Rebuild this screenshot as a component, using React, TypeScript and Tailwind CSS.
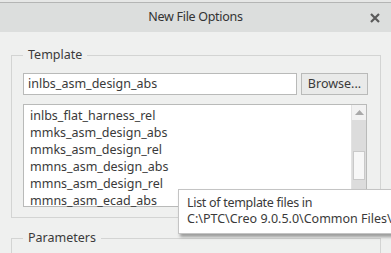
import React from "react";

const templates = [
    "inlbs_flat_harness_rel",
    "mmks_asm_design_abs",
    "mmks_asm_design_rel",
    "mmns_asm_design_abs",
    "mmns_asm_design_rel",
    "mmns_asm_ecad_abs",
];

function CloseIcon() {
    return (
        <svg width="10" height="10" viewBox="0 0 10 10">
            <path d="M1 1 L9 9 M9 1 L1 9" stroke="#5a5a5a" strokeWidth="2.2" />
        </svg>
    );
}

function App() {
    return (
        <div
            className="relative w-[391px] h-[253px] overflow-hidden bg-[#eff0ef] text-[#3a3a3a]"
            style={{ fontFamily: "'Noto Sans', 'Open Sans', sans-serif" }}
        >
            {/* window top edge */}
            <div className="h-[3px] bg-[#e6e7e6] border-b border-[#b4b5b4]" />

            {/* title bar */}
            <div className="flex items-center h-[29px] bg-[#dcdedd] pl-[21px] pr-[11px]">
                <div className="flex-1 text-center text-[12.5px] tracking-[-0.3px] text-[#333]">New File Options</div>
                <CloseIcon />
            </div>

            {/* template group */}
            <fieldset className="mt-[15px] ml-[11px] w-[370px] border border-[#d3d4d3] px-[11px] pt-[10px] pb-[10px]">
                <legend className="px-[5px] text-[12.5px] leading-[16px]">Template</legend>
                <div className="flex gap-[4px]">
                    <div className="w-[274px] h-[22px] bg-white border border-[#b9bab9] pl-[4px] text-[12.5px] leading-[20px]">
                        inlbs_asm_design_abs
                    </div>
                    <button className="w-[67px] h-[22px] bg-[#e9eae9] border border-[#b9bab9] text-[12.5px] leading-[20px]">
                        Browse...
                    </button>
                </div>
                <div className="flex mt-[9px] w-[344px] h-[103px] bg-white border border-[#b9bab9]">
                    <div className="flex-1 pt-[2px] pl-[6px] text-[12.5px]">
                        {templates.map((t) => (
                            <div key={t} className="h-[17px] leading-[17px]">
                                {t}
                            </div>
                        ))}
                    </div>
                    {/* scrollbar */}
                    <div className="flex flex-col w-[15px] border-l border-[#e2e2e2] bg-[#dcdcdc]">
                        <div className="flex justify-center items-center h-[15px] bg-[#f2f2f2]">
                            <svg width="9" height="5" viewBox="0 0 9 5">
                                <path d="M0 5 L4.5 0 L9 5 Z" fill="#a9a9a9" />
                            </svg>
                        </div>
                        <div className="h-[31px]" />
                        <div className="h-[29px] mx-[1px] bg-[#f7f7f7] border border-[#c9c9c9]" />
                    </div>
                </div>
            </fieldset>

            {/* parameters group */}
            <fieldset className="mt-[12px] ml-[11px] w-[370px] h-[40px] border border-[#d3d4d3] px-[11px]">
                <legend className="px-[5px] text-[12.5px] leading-[16px]">Parameters</legend>
            </fieldset>

            {/* tooltip */}
            <div className="absolute left-[178px] top-[189px] w-[240px] h-[45px] bg-white border border-[#c4c4c4] shadow-[2px_3px_3px_rgba(0,0,0,0.35)] pl-[8px] pt-[5px] text-[12.5px] leading-[16px] whitespace-nowrap">
                <div className="tracking-[-0.3px]">List of template files in</div>
                <div>C:\PTC\Creo 9.0.5.0\Common Files\templates</div>
            </div>
        </div>
    );
}

export default App;
